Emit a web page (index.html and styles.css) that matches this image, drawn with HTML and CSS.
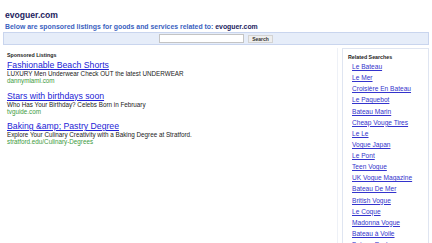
FILE: index.html
```html
<!DOCTYPE html>
<html lang="en">
<head>
    <meta charset="UTF-8">
    <meta name="viewport" content="width=device-width, initial-scale=1.0">
    <title>evoguer.com</title>

    <link rel="stylesheet" href="styles.css">
</head>
<body>
    <header class="top">
      <h1 class="domain">evoguer.com</h1>
      <p class="intro">Below are sponsored listings for goods and services related to: <span>evoguer.com</span></p>
    </header>

    <form class="searchbar">
      <input type="text" class="query">
      <button type="button" class="go">Search</button>
    </form>

    <main>
      <section class="listings">
        <h2>Sponsored Listings</h2>

        <div class="ad">
          <a href="#" class="ad-title">Fashionable Beach Shorts</a>
          <p class="ad-text">LUXURY Men Underwear Check OUT the latest UNDERWEAR</p>
          <p class="ad-url">dannymiami.com</p>
        </div>

        <div class="ad">
          <a href="#" class="ad-title">Stars with birthdays soon</a>
          <p class="ad-text">Who Has Your Birthday? Celebs Born in February</p>
          <p class="ad-url">tvguide.com</p>
        </div>

        <div class="ad">
          <a href="#" class="ad-title">Baking &amp;amp; Pastry Degree</a>
          <p class="ad-text">Explore Your Culinary Creativity with a Baking Degree at Stratford.</p>
          <p class="ad-url">stratford.edu/Culinary-Degrees</p>
        </div>
      </section>

      <aside class="related">
        <h2>Related Searches</h2>
        <ul>
          <li><a href="#">Le Bateau</a></li>
          <li><a href="#">Le Mer</a></li>
          <li><a href="#">Croisière En Bateau</a></li>
          <li><a href="#">Le Paquebot</a></li>
          <li><a href="#">Bateau Marin</a></li>
          <li><a href="#">Cheap Vouge Tires</a></li>
          <li><a href="#">Le Le</a></li>
          <li><a href="#">Vogue Japan</a></li>
          <li><a href="#">Le Pont</a></li>
          <li><a href="#">Teen Vogue</a></li>
          <li><a href="#">UK Vogue Magazine</a></li>
          <li><a href="#">Bateau De Mer</a></li>
          <li><a href="#">British Vogue</a></li>
          <li><a href="#">Le Coque</a></li>
          <li><a href="#">Madonna Vogue</a></li>
          <li><a href="#">Bateau à Voile</a></li>
          <li><a href="#">Bateau Peche</a></li>
        </ul>
      </aside>
    </main>
</body>
</html>
```

FILE: styles.css
```css
* {
    box-sizing: border-box;
}

body {
    margin: 0;
    padding: 0;
    background-color: white;
    font-family: "Liberation Sans", Arial, sans-serif;
    overflow: hidden;
}

.top {
    padding: 10px 5px 0 5px;
}

.domain {
    margin: 0;
    font-size: 8.6px;
    line-height: 11px;
    color: #1c1c5e;
}

.intro {
    margin: 0;
    font-size: 6.9px;
    line-height: 11px;
    font-weight: bold;
    color: #3a5fc0;
}

.intro span {
    color: #1c1c5e;
}

.searchbar {
    margin: 0 3px 0 3px;
    height: 13px;
    background-color: #e6edf9;
    border: 1px solid #c9d5ee;
    display: flex;
    align-items: center;
    justify-content: center;
    gap: 4px;
}

.query {
    width: 85px;
    height: 9px;
    padding: 0;
    border: 1px solid #c4c4c4;
    background: white;
}

.go {
    height: 8px;
    padding: 0 3px;
    font-size: 5px;
    font-weight: bold;
    font-family: inherit;
    line-height: 6px;
    color: #333;
    background-color: #eeeeee;
    border: 1px solid #d3d3d3;
}

main {
    display: flex;
    gap: 4px;
    margin: 3px 3px 0 3px;
}

.listings {
    flex-grow: 1;
    padding: 3px 4px;
    border-right: 1px solid #eef1f7;
    min-height: 200px;
}

h2 {
    margin: 0 0 1px 0;
    font-size: 5.3px;
    line-height: 8px;
    color: #222;
}

.ad {
    margin-bottom: 6.5px;
}

.ad-title {
    display: block;
    font-size: 8.7px;
    line-height: 10px;
    color: #2323d6;
}

.ad-text {
    margin: 0;
    font-size: 6.3px;
    line-height: 7px;
    color: #222;
}

.ad-url {
    margin: 0;
    font-size: 6.3px;
    line-height: 7px;
    color: #3c9a3c;
}

.related {
    width: 87px;
    padding: 4px 5px;
    border: 1px solid #dfe5f1;
    min-height: 220px;
}

.related h2 {
    margin: 0;
}

.related ul {
    list-style: none;
    margin: 0;
    padding: 0 0 0 4px;
}

.related li {
    font-size: 6.6px;
    line-height: 11.12px;
}

.related a {
    color: #3333cc;
}
```
